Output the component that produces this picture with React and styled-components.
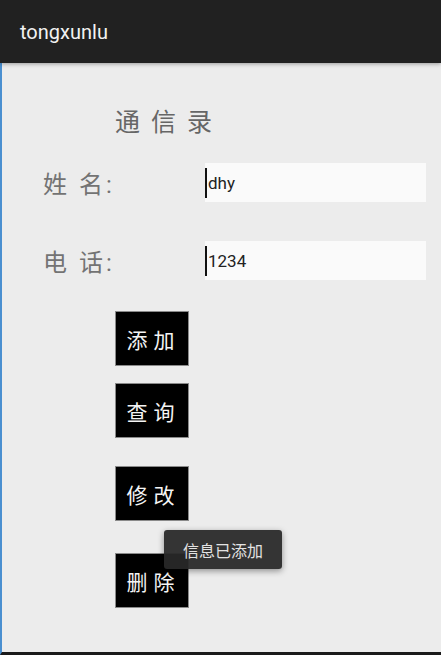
import React from "react";
import styled, { createGlobalStyle } from "styled-components";

const GlobalStyle = createGlobalStyle`
        html, body {
                margin: 0;
                padding: 0;
                background: #ececec;
        }
        body {
                font-family: Roboto, "Noto Sans CJK SC", sans-serif;
        }
`;

const Screen = styled.div`
        position: relative;
        width: 441px;
        height: 655px;
        display: flex;
        flex-direction: column;
        background: #ececec;
        overflow: hidden;
`;
const ActionBar = styled.header`
        height: 63px;
        flex: none;
        display: flex;
        align-items: center;
        padding-left: 20px;
        background: #212121;
        color: #f2f2f2;
        font-size: 20px;
        box-shadow: 0 1px 4px rgba(0, 0, 0, 0.35);
        z-index: 1;
`;
const Body = styled.main`
        flex: 1;
        display: flex;
        flex-direction: column;
        border-left: 2px solid #4a8fd0;
        border-bottom: 3px solid #1a1a1a;
`;
const Title = styled.h1`
        margin: 45px 0 0 113px;
        font-size: 25px;
        font-weight: 400;
        line-height: 30px;
        letter-spacing: 11px;
        color: #666;
`;
const Row = styled.div`
        display: flex;
        align-items: center;
        margin-top: ${(p) => p.top}px;
        height: 39px;
`;
const Label = styled.span`
        width: 203px;
        padding-left: 41px;
        box-sizing: border-box;
        font-size: 24px;
        color: #737373;
        letter-spacing: 3px;
`;
const Field = styled.div`
        width: 221px;
        height: 39px;
        display: flex;
        align-items: center;
        background: #fafafa;
        font-size: 17px;
        color: #222;
        &::before {
                content: "";
                width: 2px;
                height: 30px;
                margin-right: 1px;
                background: #111;
        }
`;
const Button = styled.button`
        display: block;
        width: 74px;
        height: 55px;
        margin: ${(p) => p.top}px 0 0 113px;
        padding: 0 0 0 3px;
        background: #000;
        border: 1px solid #8a8a8a;
        color: #f4f4f4;
        font-family: "Noto Sans CJK SC", sans-serif;
        font-size: 21px;
        letter-spacing: 6px;
`;
const Toast = styled.div`
        position: absolute;
        left: 164px;
        top: 530px;
        width: 118px;
        height: 39px;
        display: flex;
        align-items: center;
        justify-content: center;
        background: rgba(40, 40, 40, 0.94);
        border-radius: 3px;
        box-shadow: 0 2px 6px rgba(0, 0, 0, 0.4);
        color: #e2e2e2;
        font-family: "Noto Sans CJK SC", sans-serif;
        font-size: 16px;
`;

const App = () => {
        return (
                <Screen>
                        <GlobalStyle />
                        <ActionBar>tongxunlu</ActionBar>
                        <Body>
                                <Title>通信录</Title>
                                <Row top={25}>
                                        <Label>姓 名:</Label>
                                        <Field>dhy</Field>
                                </Row>
                                <Row top={39}>
                                        <Label>电 话:</Label>
                                        <Field>1234</Field>
                                </Row>
                                <Button top={31}>添加</Button>
                                <Button top={17}>查询</Button>
                                <Button top={28}>修改</Button>
                                <Button top={32}>删除</Button>
                        </Body>
                        <Toast>信息已添加</Toast>
                </Screen>
        );
};

export default App;
